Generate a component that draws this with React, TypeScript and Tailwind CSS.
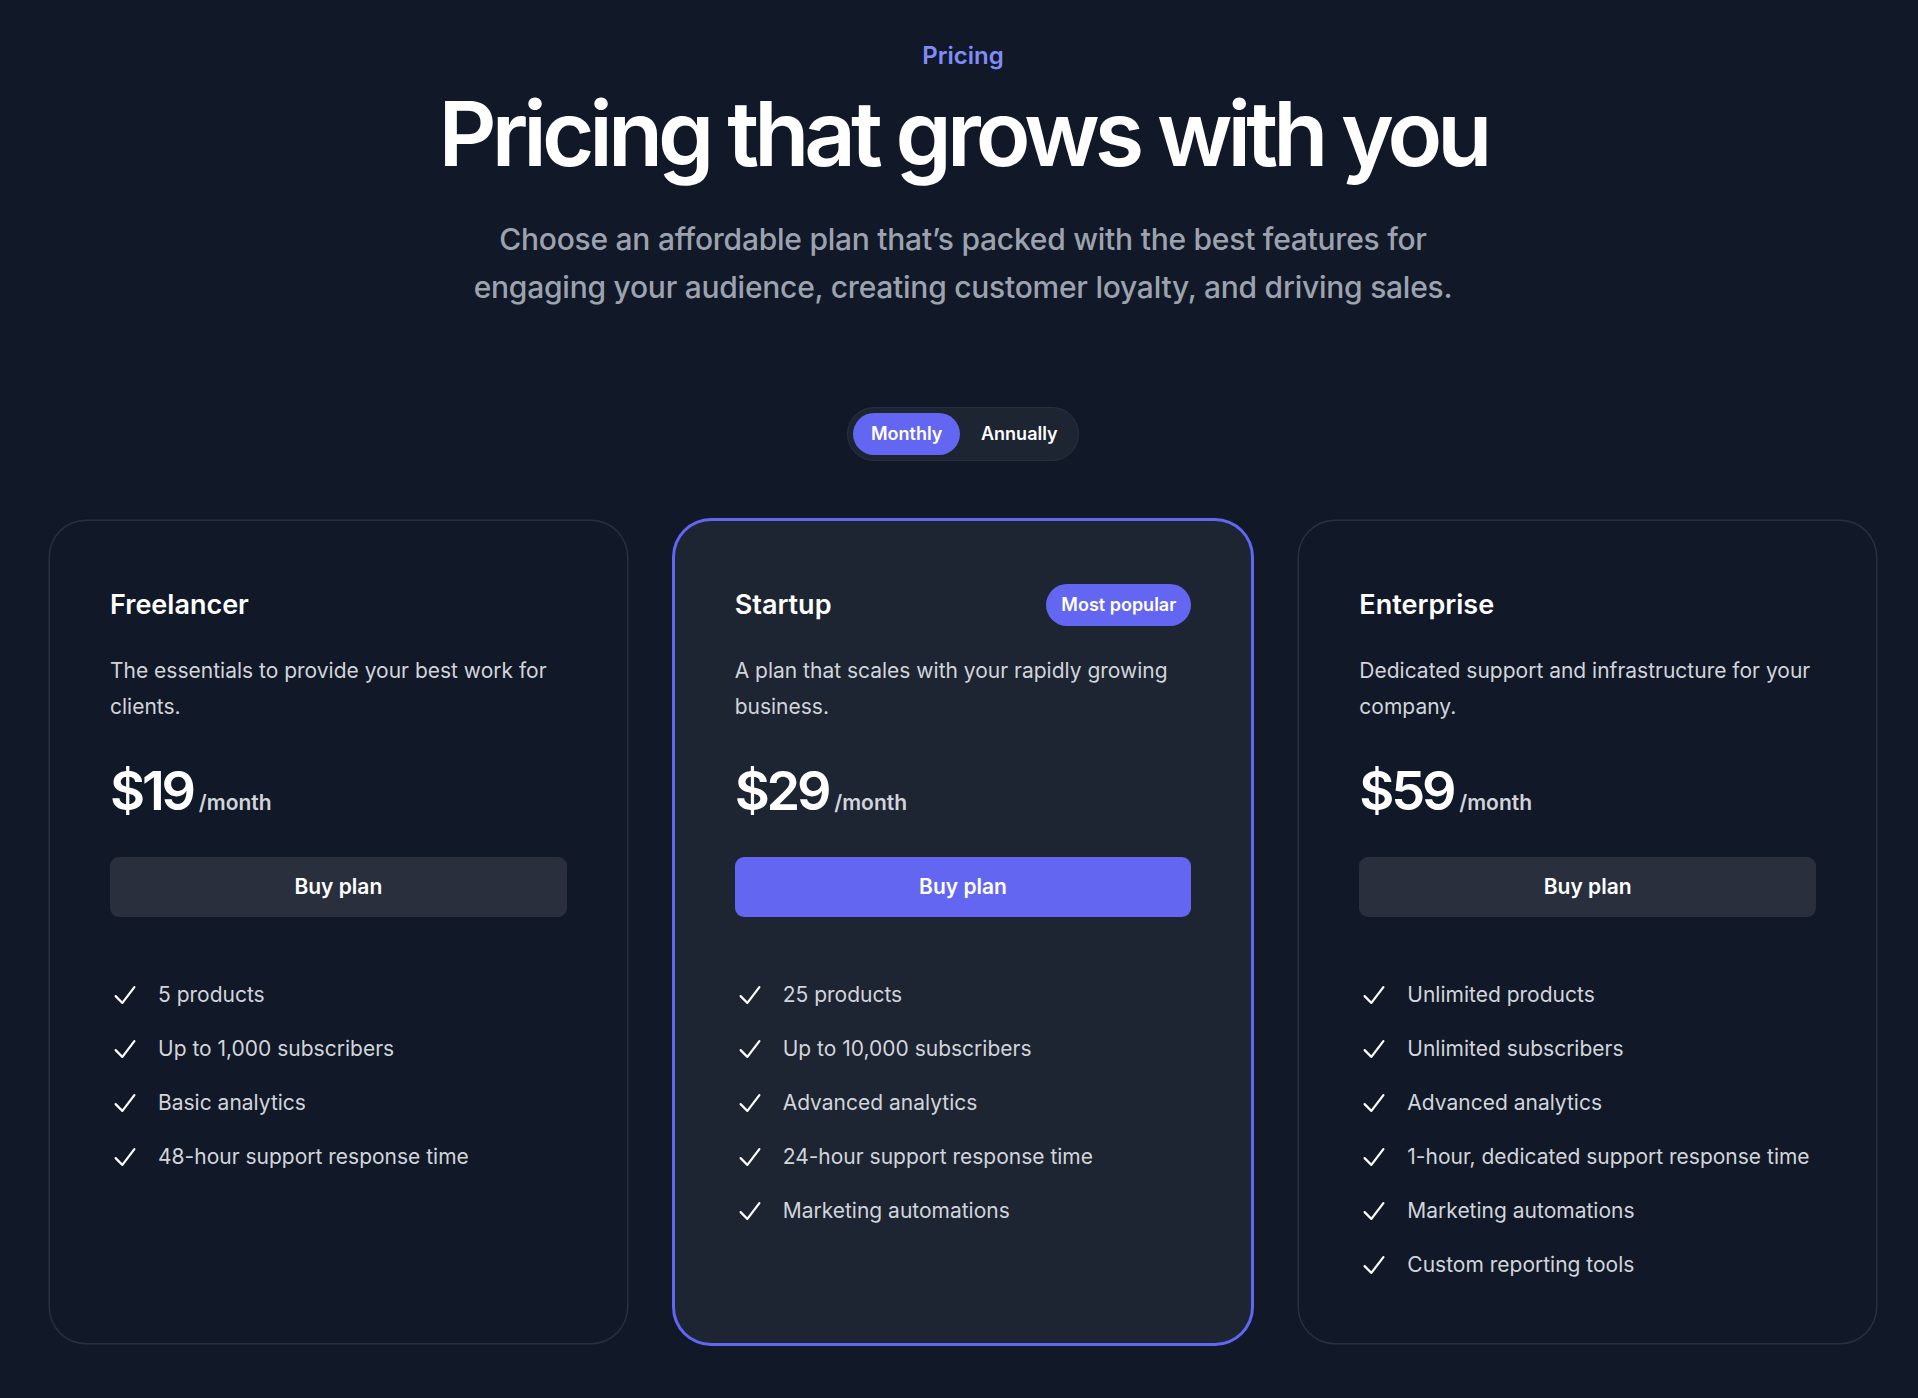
type Tier = {
  name: string;
  description: string;
  price: string;
  features: string[];
  featured: boolean;
};

const tiers: Tier[] = [
  {
    name: "Freelancer",
    description: "The essentials to provide your best work for clients.",
    price: "$19",
    features: ["5 products", "Up to 1,000 subscribers", "Basic analytics", "48-hour support response time"],
    featured: false,
  },
  {
    name: "Startup",
    description: "A plan that scales with your rapidly growing business.",
    price: "$29",
    features: [
      "25 products",
      "Up to 10,000 subscribers",
      "Advanced analytics",
      "24-hour support response time",
      "Marketing automations",
    ],
    featured: true,
  },
  {
    name: "Enterprise",
    description: "Dedicated support and infrastructure for your company.",
    price: "$59",
    features: [
      "Unlimited products",
      "Unlimited subscribers",
      "Advanced analytics",
      "1-hour, dedicated support response time",
      "Marketing automations",
      "Custom reporting tools",
    ],
    featured: false,
  },
];

const CheckIcon = () => (
  <svg viewBox="0 0 20 20" fill="currentColor" className="h-[36px] w-[30px] flex-none text-white">
    <path
      fillRule="evenodd"
      clipRule="evenodd"
      d="M16.704 4.153a.75.75 0 0 1 .143 1.052l-8 10.5a.75.75 0 0 1-1.127.075l-4.5-4.5a.75.75 0 0 1 1.06-1.06l3.894 3.893 7.48-9.817a.75.75 0 0 1 1.052-.143Z"
    />
  </svg>
);

export default function App() {
  return (
    <div className="min-h-[1398px] bg-[#111827] pt-[35px] font-['Inter',sans-serif]">
      <div className="pl-[50px] pr-[42px]">
        <div className="mx-auto text-center">
          <h2 className="text-[24px] leading-[42px] font-semibold text-[#818cf8]">Pricing</h2>
          <p className="mt-[12px] text-[90px] leading-none font-semibold tracking-[-0.055em] text-white">
            Pricing that grows with you
          </p>
        </div>
        <p className="mx-auto mt-[36px] max-w-[1008px] text-center text-[30px] leading-[48px] font-medium tracking-[-0.25px] text-pretty text-[#9ca3af]">
          Choose an affordable plan that’s packed with the best features for engaging your audience, creating customer
          loyalty, and driving sales.
        </p>

        <div className="mt-[96px] flex justify-center">
          <div className="grid grid-cols-2 gap-x-[6px] rounded-full bg-white/5 p-[6px] text-center text-[18px] leading-[30px] font-semibold text-white ring-1 ring-inset ring-white/5">
            <span className="rounded-full bg-[#6366f1] px-[15px] py-[6px]">Monthly</span>
            <span className="rounded-full px-[15px] py-[6px]">Annually</span>
          </div>
        </div>

        <div className="mt-[60px] grid grid-cols-3 gap-[48px]">
          {tiers.map((tier) => (
            <div
              key={tier.name}
              className={
                tier.featured
                  ? "rounded-[36px] bg-white/5 p-[60px] ring-[3px] ring-[#6366f1]"
                  : "rounded-[36px] p-[60px] ring-[1.5px] ring-white/10"
              }
            >
              <div className="flex items-center justify-between gap-x-[24px]">
                <h3 className="text-[27px] leading-[48px] font-semibold text-white">{tier.name}</h3>
                {tier.featured && (
                  <p className="rounded-full bg-[#6366f1] px-[15px] py-[6px] text-[18px] leading-[30px] font-semibold text-white">
                    Most popular
                  </p>
                )}
              </div>
              <p className="mt-[24px] text-[21px] leading-[36px] text-[#d1d5db]">{tier.description}</p>
              <p className="mt-[36px] flex items-baseline gap-x-[6px]">
                <span className="text-[54px] leading-[60px] font-semibold tracking-[-0.06em] text-white">{tier.price}</span>
                <span className="text-[21px] leading-[36px] font-semibold text-[#d1d5db]">/month</span>
              </p>
              <a
                href="#"
                className={
                  tier.featured
                    ? "mt-[36px] block rounded-[9px] bg-[#6366f1] px-[18px] py-[12px] text-center text-[21px] leading-[36px] font-semibold text-white"
                    : "mt-[36px] block rounded-[9px] bg-white/10 px-[18px] py-[12px] text-center text-[21px] leading-[36px] font-semibold text-white"
                }
              >
                Buy plan
              </a>
              <ul className="mt-[60px] space-y-[18px] text-[21px] leading-[36px] text-[#d1d5db]">
                {tier.features.map((feature) => (
                  <li key={feature} className="flex gap-x-[18px]">
                    <CheckIcon />
                    {feature}
                  </li>
                ))}
              </ul>
            </div>
          ))}
        </div>
      </div>
    </div>
  );
}
